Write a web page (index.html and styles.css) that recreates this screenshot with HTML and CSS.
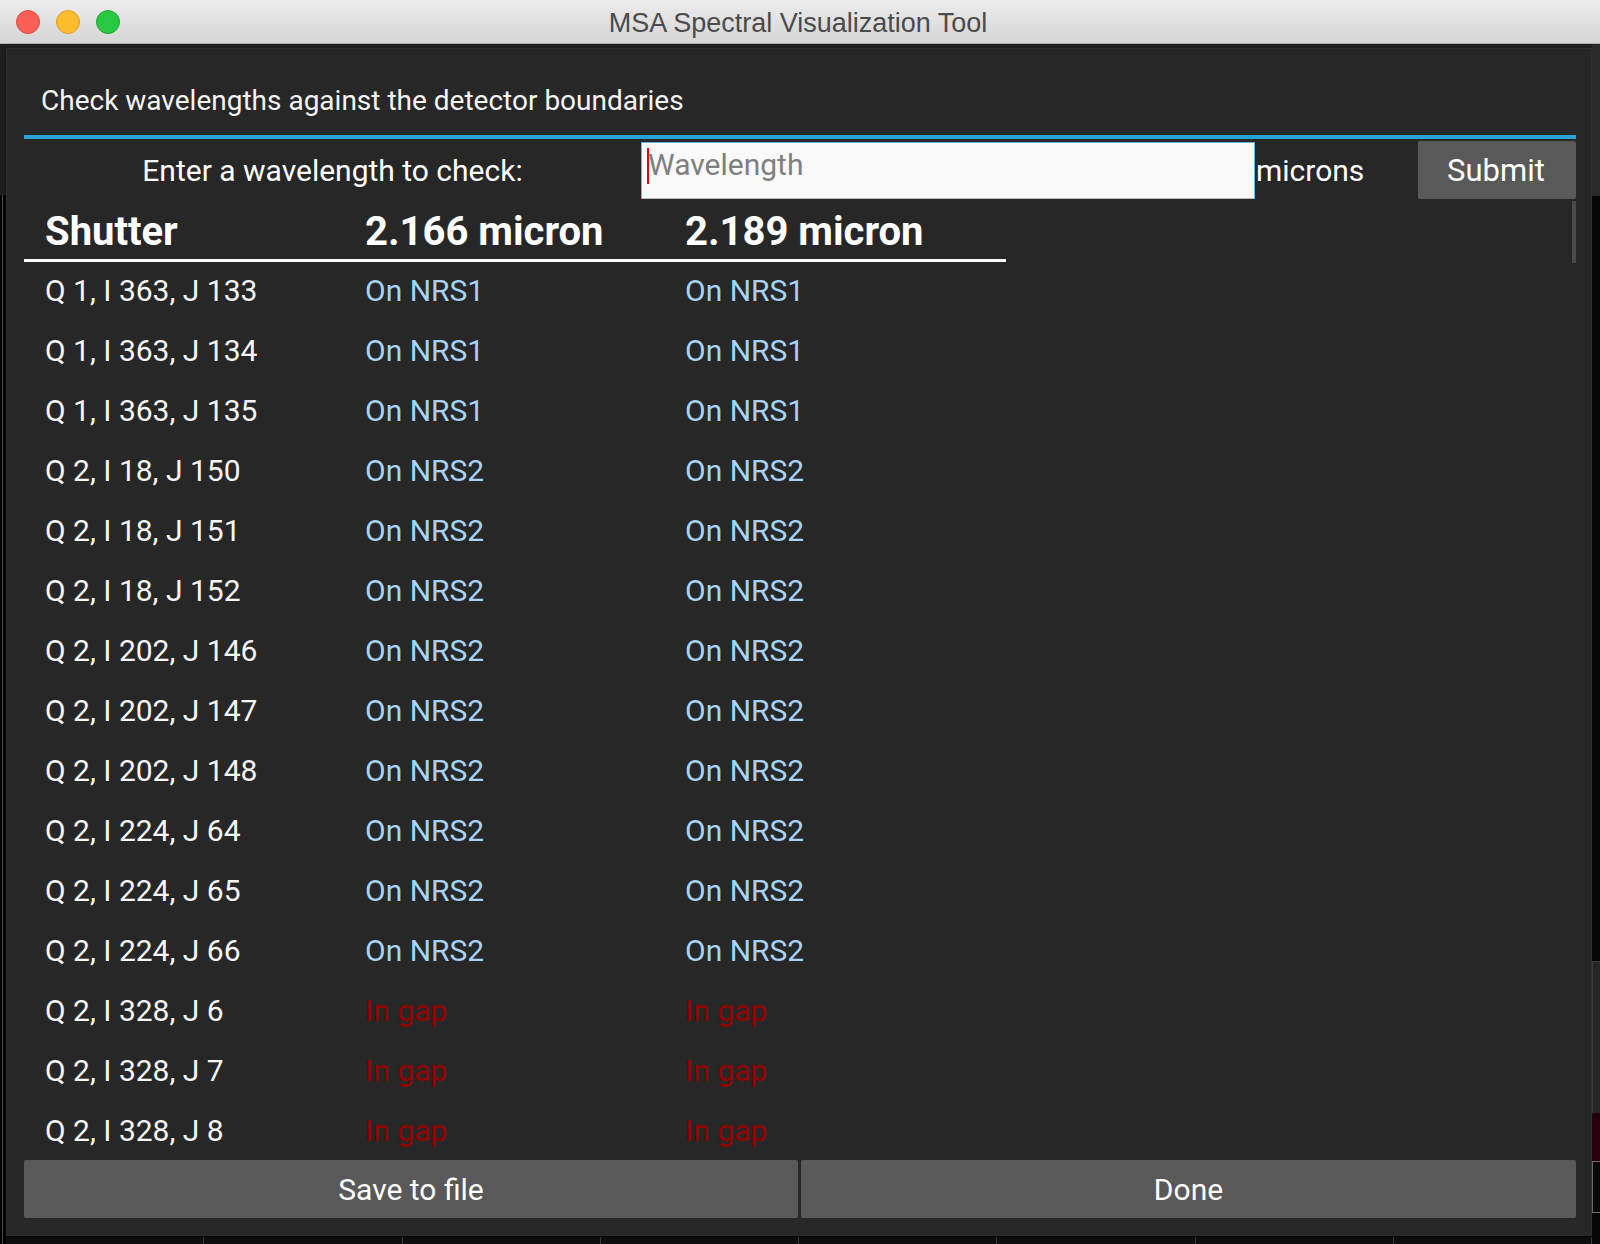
FILE: index.html
```html
<!DOCTYPE html>
<html lang="en">
<head>
<meta charset="utf-8">
<title>MSA Spectral Visualization Tool</title>
<link rel="stylesheet" href="styles.css">
</head>
<body>
<div class="screen">
  <header class="titlebar">
    <div class="lights">
      <span class="light red"></span>
      <span class="light yellow"></span>
      <span class="light green"></span>
    </div>
    <div class="title">MSA Spectral Visualization Tool</div>
    <div class="titlebar-spacer"></div>
  </header>
  <div class="desktop">
    <div class="edge edge-left">
      <div class="edge-block edge-dark" style="height:151px"></div>
      <div class="edge-block edge-black-line"></div>
    </div>
    <div class="middle">
      <section class="popup">
        <div class="popup-title">Check wavelengths against the detector boundaries</div>
        <div class="separator"></div>
        <div class="entry-row">
          <div class="entry-label">Enter a wavelength to check:</div>
          <div class="input"><span class="caret"></span><span class="placeholder">Wavelength</span></div>
          <div class="unit">microns</div>
          <button class="btn submit">Submit</button>
        </div>
        <div class="scroll">
          <div class="table">
            <div class="thead">
              <div class="th">Shutter</div>
              <div class="th">2.166 micron</div>
              <div class="th">2.189 micron</div>
            </div>
            <div class="row"><div class="cell">Q 1, I 363, J 133</div><div class="cell on">On NRS1</div><div class="cell on">On NRS1</div></div>
            <div class="row"><div class="cell">Q 1, I 363, J 134</div><div class="cell on">On NRS1</div><div class="cell on">On NRS1</div></div>
            <div class="row"><div class="cell">Q 1, I 363, J 135</div><div class="cell on">On NRS1</div><div class="cell on">On NRS1</div></div>
            <div class="row"><div class="cell">Q 2, I 18, J 150</div><div class="cell on">On NRS2</div><div class="cell on">On NRS2</div></div>
            <div class="row"><div class="cell">Q 2, I 18, J 151</div><div class="cell on">On NRS2</div><div class="cell on">On NRS2</div></div>
            <div class="row"><div class="cell">Q 2, I 18, J 152</div><div class="cell on">On NRS2</div><div class="cell on">On NRS2</div></div>
            <div class="row"><div class="cell">Q 2, I 202, J 146</div><div class="cell on">On NRS2</div><div class="cell on">On NRS2</div></div>
            <div class="row"><div class="cell">Q 2, I 202, J 147</div><div class="cell on">On NRS2</div><div class="cell on">On NRS2</div></div>
            <div class="row"><div class="cell">Q 2, I 202, J 148</div><div class="cell on">On NRS2</div><div class="cell on">On NRS2</div></div>
            <div class="row"><div class="cell">Q 2, I 224, J 64</div><div class="cell on">On NRS2</div><div class="cell on">On NRS2</div></div>
            <div class="row"><div class="cell">Q 2, I 224, J 65</div><div class="cell on">On NRS2</div><div class="cell on">On NRS2</div></div>
            <div class="row"><div class="cell">Q 2, I 224, J 66</div><div class="cell on">On NRS2</div><div class="cell on">On NRS2</div></div>
            <div class="row"><div class="cell">Q 2, I 328, J 6</div><div class="cell gap">In gap</div><div class="cell gap">In gap</div></div>
            <div class="row"><div class="cell">Q 2, I 328, J 7</div><div class="cell gap">In gap</div><div class="cell gap">In gap</div></div>
            <div class="row"><div class="cell">Q 2, I 328, J 8</div><div class="cell gap">In gap</div><div class="cell gap">In gap</div></div>
          </div>
          <div class="scrollbar"></div>
        </div>
        <div class="actions">
          <button class="btn">Save to file</button>
          <button class="btn">Done</button>
        </div>
      </section>
      <div class="bottom-strip">
        <div class="strip-cell"></div><div class="strip-cell"></div><div class="strip-cell"></div><div class="strip-cell"></div><div class="strip-cell"></div><div class="strip-cell"></div><div class="strip-cell"></div><div class="strip-cell"></div>
      </div>
    </div>
    <div class="edge edge-right">
      <div class="edge-block edge-grey" style="height:152px"></div>
      <div class="edge-block edge-black" style="height:734px"></div>
      <div class="edge-block edge-panel" style="height:152px"></div>
      <div class="edge-block edge-maroon" style="height:48px"></div>
      <div class="edge-block edge-boxed" style="height:52px"></div>
      <div class="edge-block edge-black"></div>
    </div>
  </div>
</div>
</body>
</html>
```
FILE: styles.css
```css
* {
  box-sizing: border-box;
}

html, body {
  margin: 0;
  padding: 0;
  background: #1d1d1d;
}

.screen {
  width: 1600px;
  height: 1244px;
  overflow: hidden;
  display: flex;
  flex-direction: column;
}

/* ---------- title bar ---------- */
.titlebar {
  height: 44px;
  flex: none;
  display: grid;
  grid-template-columns: 1fr auto 1fr;
  align-items: center;
  background: linear-gradient(#ececec, #d5d5d5);
  border-bottom: 1px solid #b3b3b3;
}

.lights {
  display: flex;
  gap: 16px;
  padding-left: 16px;
  padding-top: 1px;
}

.light {
  width: 24px;
  height: 24px;
  border-radius: 50%;
  display: block;
}

.light.red {
  background: #fc5f57;
  border: 1px solid #df4a42;
}

.light.yellow {
  background: #fdbc2e;
  border: 1px solid #df9f22;
}

.light.green {
  background: #28c840;
  border: 1px solid #1fa931;
}

.title {
  font-family: "Liberation Sans", Arial, sans-serif;
  font-size: 27px;
  color: #4b4b4b;
  padding-top: 3px;
  padding-right: 4px;
}

/* ---------- desktop ---------- */
.desktop {
  flex: 1;
  display: flex;
  background: #1e1e1e;
}

.edge {
  display: flex;
  flex-direction: column;
}

.edge-left {
  width: 6px;
}

.edge-right {
  width: 8px;
}

.edge-block {
  flex: none;
}

.edge-dark {
  background: #1e1e1e;
}

.edge-black-line {
  flex: 1;
  background: #000;
  border-left: 2px solid #000;
  box-shadow: inset 1px 0 0 #4a4a4a;
}

.edge-grey {
  background: #2b2b2b;
}

.edge-black {
  background: #050505;
  flex: 1 1 auto;
}

.edge-panel {
  background: #262626;
  border-left: 1px solid #3c3c3c;
  border-top: 1px solid #3c3c3c;
}

.edge-maroon {
  background: #25000c;
}

.edge-boxed {
  background: #0a0a0a;
  border: 1px solid #6a6a6a;
  border-right: none;
}

.middle {
  flex: 1;
  display: flex;
  flex-direction: column;
  padding-top: 4px;
}

/* ---------- popup ---------- */
.popup {
  height: 1188px;
  flex: none;
  background: #272727;
  border: 1px solid #2f2f2f;
  padding: 0 15px 17px 17px;
  display: flex;
  flex-direction: column;
  font-family: Roboto, "Noto Sans", sans-serif;
  color: #ffffff;
  box-shadow: 0 2px 2px rgba(0, 0, 0, 0.7);
}

.popup-title {
  font-size: 28px;
  line-height: 32px;
  padding: 36px 0 18px 17px;
  color: #f4f4f4;
}

.separator {
  height: 4px;
  background: #28a4d4;
}

.entry-row {
  margin-top: 2px;
  height: 58px;
  display: grid;
  grid-template-columns: 617px 614px 163px 158px;
  align-items: center;
  font-size: 30px;
}

.entry-label {
  text-align: center;
  line-height: 35px;
}

.input {
  align-self: end;
  height: 57px;
  background: #f9f9f9;
  border: 1px solid #63b3da;
  border-bottom-color: #bcbcbc;
  padding: 4px 5px 0 5px;
  display: flex;
  align-items: flex-start;
  line-height: 35px;
}

.caret {
  display: block;
  width: 2px;
  height: 36px;
  margin-top: 1px;
  margin-right: -1px;
  background: #f00000;
}

.placeholder {
  color: #7f7f7f;
}

.unit {
  padding-left: 1px;
  line-height: 35px;
}

.btn {
  font-family: Roboto, "Noto Sans", sans-serif;
  font-size: 30px;
  color: #ffffff;
  background: #595959;
  border: none;
  border-radius: 2px;
  padding: 0;
  margin: 0;
}

.submit {
  height: 58px;
  font-size: 31px;
  padding-right: 2px;
}

/* ---------- table ---------- */
.scroll {
  margin-top: 2px;
  flex: 1;
  min-height: 0;
  overflow: hidden;
  display: flex;
  justify-content: space-between;
  align-items: flex-start;
}

.table {
  width: 982px;
  flex: none;
}

.thead {
  display: grid;
  grid-template-columns: 320px 320px 342px;
  padding-top: 7px;
  padding-bottom: 4px;
  border-bottom: 3px solid #ffffff;
}

.th {
  font-weight: 700;
  font-size: 40px;
  line-height: 47px;
  padding-left: 21px;
}

.row {
  display: grid;
  grid-template-columns: 320px 320px 342px;
  height: 60px;
}

.cell {
  font-size: 30px;
  line-height: 58px;
  padding-left: 21px;
  color: #f6f6f6;
}

.cell.on {
  color: #a7d3f6;
}

.cell.gap {
  color: #960000;
}

.scrollbar {
  width: 4px;
  height: 62px;
  flex: none;
  background: #4b4b4b;
}

/* ---------- actions ---------- */
.actions {
  height: 58px;
  flex: none;
  display: grid;
  grid-template-columns: 774px 775px;
  gap: 3px;
}

.actions .btn {
  height: 58px;
}

/* ---------- bottom strip ---------- */
.bottom-strip {
  flex: 1;
  display: flex;
  background: #0d0d0d;
  border-top: 1px solid #000;
}

.strip-cell {
  flex: 1;
  border-right: 1px solid #3a3a3a;
}
```
